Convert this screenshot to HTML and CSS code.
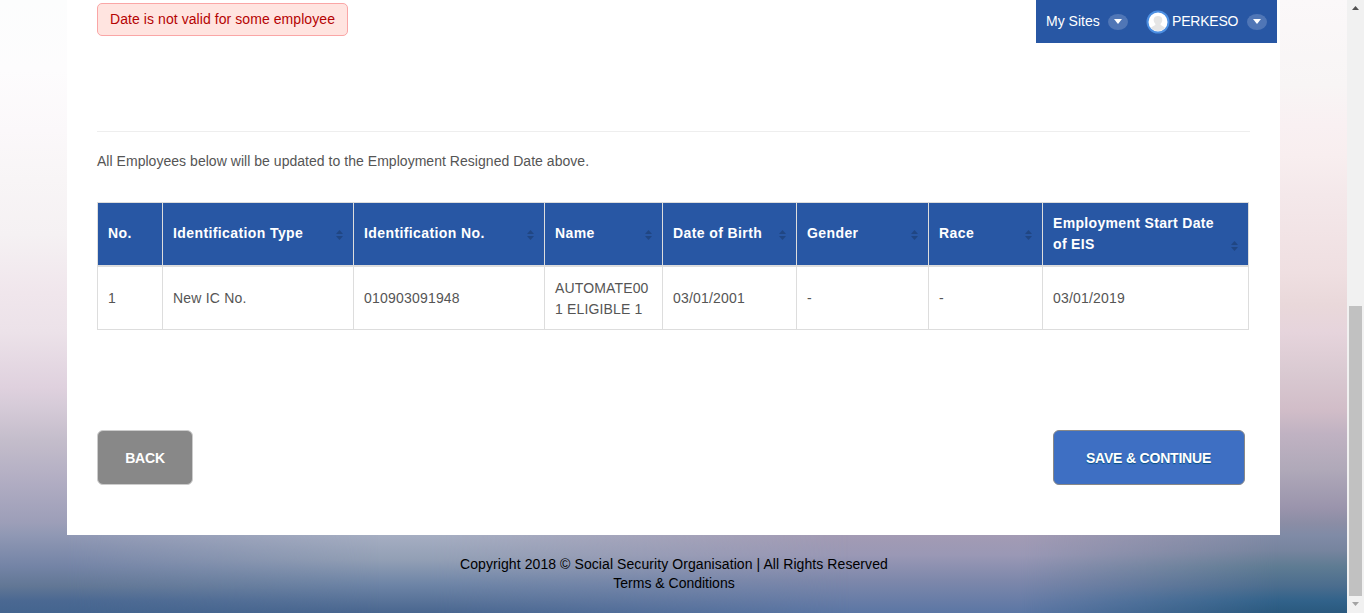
FILE: index.html
```
<!DOCTYPE html>
<html lang="en">
<head>
<meta charset="utf-8">
<title>Employment Resigned Date</title>
<link rel="stylesheet" href="styles.css">
</head>
<body>
<div class="page">
  <div class="backdrop"><i class="tone tone-right"></i><i class="tone tone-mid"></i><i class="tone tone-center"></i><i class="tone tone-left"></i></div>
  <main class="panel">
    <nav class="userbar">
      <span class="sites">My Sites</span>
      <span class="caret"><svg width="8" height="5" viewBox="0 0 8 5"><path d="M0 0h8L4 5z" fill="#fff"/></svg></span>
      <svg class="avatar" width="24" height="24" viewBox="0 0 24 24"><circle cx="12" cy="12" r="10.5" fill="#fff" stroke="#4c8fe2" stroke-width="2"/><path d="M5 18c1-2 4.500-2 4.500-4-3-3-2.500-8 2.500-8s5.500 5 2.500 8c0 2 3.500 2 4.500 4-4 4-10 4-14 0z" fill="#e5e5e5"/></svg>
      <span class="user">PERKESO</span>
      <span class="caret"><svg width="8" height="5" viewBox="0 0 8 5"><path d="M0 0h8L4 5z" fill="#fff"/></svg></span>
    </nav>
    <div class="alert">Date is not valid for some employee</div>
    <hr class="rule">
    <p class="note">All Employees below will be updated to the Employment Resigned Date above.</p>
    <table class="grid">
      <colgroup><col class="c-no"><col class="c-id"><col class="c-id"><col class="c-name"><col class="c-dob"><col class="c-gender"><col class="c-race"><col class="c-start"></colgroup>
      <thead>
        <tr>
          <th>No.</th>
          <th><div class="head"><span>Identification Type</span><svg class="sort" viewBox="0 0 7 10"><path d="M3.500 0L7 4H0zM0 6h7L3.500 10z"/></svg></div></th>
          <th><div class="head"><span>Identification No.</span><svg class="sort" viewBox="0 0 7 10"><path d="M3.500 0L7 4H0zM0 6h7L3.500 10z"/></svg></div></th>
          <th><div class="head"><span>Name</span><svg class="sort" viewBox="0 0 7 10"><path d="M3.500 0L7 4H0zM0 6h7L3.500 10z"/></svg></div></th>
          <th><div class="head"><span>Date of Birth</span><svg class="sort" viewBox="0 0 7 10"><path d="M3.500 0L7 4H0zM0 6h7L3.500 10z"/></svg></div></th>
          <th><div class="head"><span>Gender</span><svg class="sort" viewBox="0 0 7 10"><path d="M3.500 0L7 4H0zM0 6h7L3.500 10z"/></svg></div></th>
          <th><div class="head"><span>Race</span><svg class="sort" viewBox="0 0 7 10"><path d="M3.500 0L7 4H0zM0 6h7L3.500 10z"/></svg></div></th>
          <th class="two-line"><div class="head"><span>Employment Start Date<br>of EIS</span><svg class="sort" viewBox="0 0 7 10"><path d="M3.500 0L7 4H0zM0 6h7L3.500 10z"/></svg></div></th>
        </tr>
      </thead>
      <tbody>
        <tr><td>1</td><td>New IC No.</td><td>010903091948</td><td class="two-line">AUTOMATE00<br>1 ELIGIBLE 1</td><td>03/01/2001</td><td>-</td><td>-</td><td>03/01/2019</td></tr>
      </tbody>
    </table>
    <div class="actions">
      <button class="btn btn-back">BACK</button>
      <button class="btn btn-save">SAVE &amp; CONTINUE</button>
    </div>
  </main>
  <footer class="footer">
    <div class="copy">Copyright 2018 © Social Security Organisation | All Rights Reserved</div>
    <div class="terms">Terms &amp; Conditions</div>
  </footer>
</div>
<div class="scrollbar">
  <svg width="7" height="4" viewBox="0 0 7 4"><path d="M3.500 0L7 4H0z" fill="#505050"/></svg>
  <div class="thumb"></div>
  <svg width="7" height="4" viewBox="0 0 7 4"><path d="M0 0h7L3.500 4z" fill="#a3a3a3"/></svg>
</div>
</body>
</html>
```
FILE: styles.css
```
* { box-sizing: border-box; }
body {
  margin: 0;
  display: flex;
  width: 1364px;
  height: 613px;
  overflow: hidden;
  font: 14px/21px "Liberation Sans", Arial, sans-serif;
  color: #555;
}
.page { position: relative; width: 1347px; height: 613px; padding-left: 67px; }
.backdrop { position: absolute; inset: 0; z-index: -1; }
.tone { position: absolute; inset: 0; }
.tone-right { background: linear-gradient(#fbf8f9 0, #f8f5f5 85px, #f9f0f2 125px, #f8eeef 156px, #f4e8ea 195px, #efdfe1 273px, #e9d8da 305px, #e6d4dc 332px, #dacad2 371px, #d1bdc8 410px, #c0b2c2 434px, #b0a9b9 469px, #9a94ac 508px, #8b8da5 523px, #808ba6 535px, #76849e 551px, #5f7c93 566px, #4b6d8e 586px, #31628a 601px, #2a597e 613px); }
.tone-mid { background: linear-gradient(#a39bb4 535px, #9a98b5 555px, #7e88ab 580px, #5b76a4 613px); mask-image: linear-gradient(90deg, #000 1020px, transparent 1280px); }
.tone-center { background: linear-gradient(#a6aec2 535px, #929fb5 560px, #6d84a6 585px, #49668f 613px); mask-image: linear-gradient(90deg, #000 430px, transparent 850px); }
.tone-left { background: linear-gradient(#fcfdfd 0, #fdfcfd 70px, #fbf8fa 130px, #f8f5f6 180px, #f5f1f3 234px, #f0e6ec 293px, #ece2e9 332px, #dfd1de 387px, #d6cbd8 406px, #c4bdcb 440px, #b0acc2 484px, #9c9eb8 523px, #9098b4 535px, #7484a6 566px, #627795 586px, #4a6892 601px, #44658f 613px); mask-image: linear-gradient(90deg, #000 67px, transparent 380px); }
.panel { position: relative; width: 1213px; height: 535px; padding: 3px 30px 0 30px; background: #fff; }
.userbar {
  position: absolute; top: 0; right: 3px;
  display: flex; align-items: center;
  width: 241px; height: 43px; padding: 0 10px;
  background: #2857a4; color: #fff;
}
.sites { width: 62px; }
.avatar { margin-left: 18px; }
.user { width: 77px; padding-left: 2px; letter-spacing: -0.2px; }
.caret { display: flex; align-items: center; justify-content: center; width: 20px; height: 16px; border-radius: 50%; background: #5076b6; }
.alert {
  width: 251px; height: 33px; padding: 5px 12px;
  border: 1px solid #faa6a6; border-radius: 5px;
  background: #ffe4e0; color: #b50303; letter-spacing: 0.07px; white-space: nowrap;
}
.rule { height: 1px; margin: 95px 0 0; border: 0; background: #eee; }
.note { margin: 19px 0 30px; letter-spacing: 0.035px; white-space: nowrap; }
.grid { width: 1152px; table-layout: fixed; border-spacing: 0; border: solid #ddd; border-width: 1px 0 0 1px; }
.c-no { width: 65px; } .c-id { width: 191px; } .c-name { width: 118px; } .c-dob { width: 134px; }
.c-gender { width: 132px; } .c-race { width: 114px; } .c-start { width: 206px; }
th { height: 64px; padding: 0 10px 2px 10px; text-align: left; letter-spacing: 0.4px; color: #fff; background: #2857a4; border: solid #ddd; border-width: 0 1px 2px 0; white-space: nowrap; }
td { height: 63px; padding: 0 10px; letter-spacing: 0.2px; border: solid #ddd; border-width: 0 1px 1px 0; white-space: nowrap; }
th.two-line { padding-bottom: 0; letter-spacing: 0.33px; }
td.two-line { padding-top: 1px; letter-spacing: 0.15px; }
.head { display: flex; align-items: flex-end; justify-content: space-between; }
.sort { flex: none; width: 7px; height: 10px; margin-bottom: 4px; fill: #204683; }
.actions { display: flex; justify-content: space-between; padding: 100px 5px 0 0; }
.btn { height: 55px; padding: 2px 0 0; border-radius: 6px; font: bold 14px/21px "Liberation Sans", Arial, sans-serif; letter-spacing: -0.2px; color: #fff; }
.btn-back { width: 96px; border: 1px solid #ccc; background: #888; }
.btn-save { width: 192px; padding-right: 1px; border: 1px solid #888; background: #3e6fc3; text-shadow: 0 1px 1px #075080; }
.footer { width: 1213px; padding: 20px 0 0 1px; line-height: 19px; text-align: center; color: #000; }
.copy { letter-spacing: 0.08px; }
.scrollbar { display: flex; flex-direction: column; align-items: center; width: 17px; height: 613px; padding: 6px 0; background: #f1f1f1; }
.thumb { width: 13px; height: 290px; margin: 296px 0 6px; background: #c1c1c1; flex: none; }
.scrollbar svg { flex: none; }
```
